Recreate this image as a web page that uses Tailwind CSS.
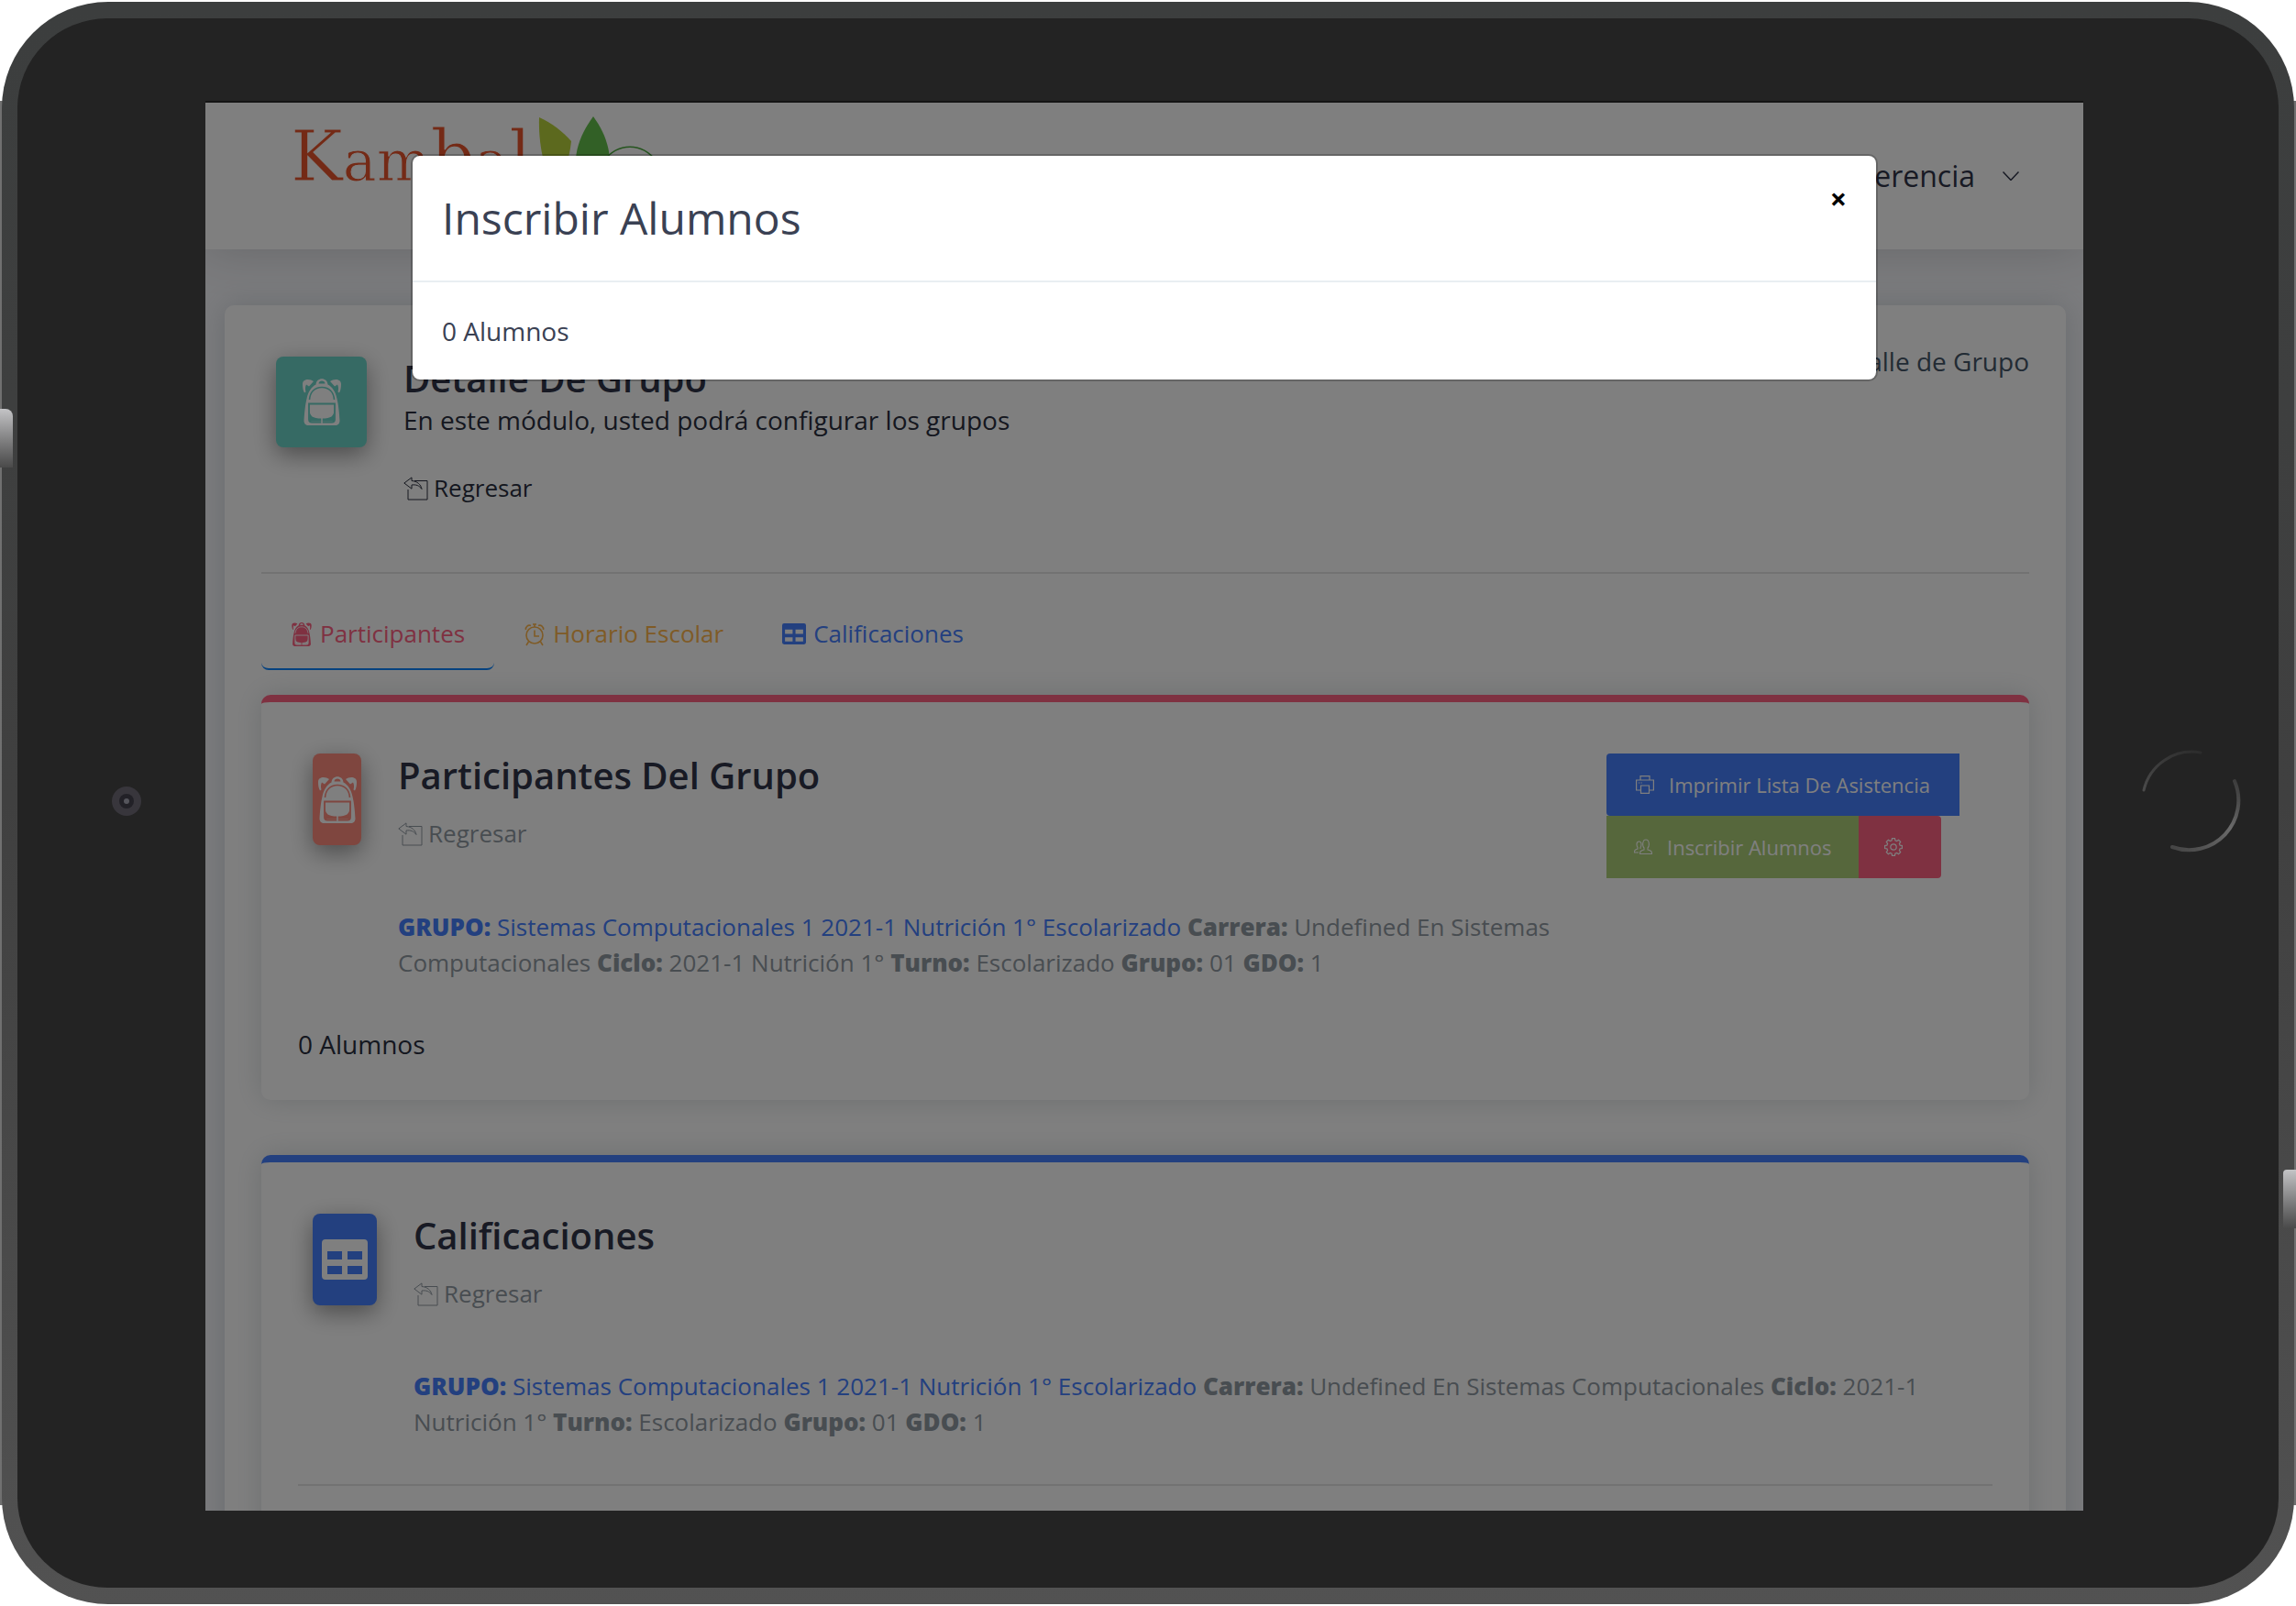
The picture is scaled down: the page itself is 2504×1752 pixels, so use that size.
<!DOCTYPE html>
<html lang="es">
<head>
<meta charset="utf-8">
<title>Detalle de Grupo</title>
<script src="https://cdn.jsdelivr.net/npm/@tailwindcss/browser@4"></script>
</head>
<body class="bg-white font-['Open_Sans',sans-serif] text-[26px] leading-[39px] text-[#2a2f3e]">

<svg class="absolute size-0" aria-hidden="true">
  <mask id="backpack-cut" maskUnits="userSpaceOnUse" x="-2" y="-2" width="46" height="56">
    <rect x="-2" y="-2" width="46" height="56" fill="#fff"/>
    <path d="M7.500 23C8 15 13 9.500 21 9.500S34 15 34.500 23" fill="none" stroke="#000" stroke-width="1.600"/>
    <path d="M7 27.500h28v17a3 3 0 0 1-3 3H10a3 3 0 0 1-3-3z" fill="none" stroke="#000" stroke-width="1.800"/>
    <path d="M7.500 34c.5 7 3 9.500 13.500 9.500S34 41 34.500 34v12.500h-27z" fill="#000"/>
    <path d="M17.500 5.500c0-4 7-4 7 0z" fill="#000"/>
  </mask>
  <symbol id="backpack" viewBox="0 0 42 51">
    <g mask="url(#backpack-cut)" fill="currentColor">
      <path d="M14.500 6.500C15-2 27-2 27.500 6.500c5 2.500 8.500 8 10 15.500 1.500 6 2.500 15 3 24 0 3-2 5-5 5h-29c-3 0-5-2-5-5C2 37 3 28 4.500 22 6 14.500 9.500 9 14.500 6.500z"/>
      <path d="M12 3C8 0 0 0 0 6c0 4 .5 7 2 9.500l1.500-1C2.500 11 3 8.500 4 6.500l3 2z"/>
      <path d="M30 3c4-3 12-3 12 3 0 4-.5 7-2 9.500l-1.500-1c1-3.500.5-6-.5-8l-3 2z"/>
    </g>
    <path d="M21 43v6" stroke="currentColor" stroke-width="1.500"/>
  </symbol>
  <symbol id="back" viewBox="0 0 27 26">
    <g fill="none" stroke="currentColor" stroke-width="1">
      <path d="M12 4.500h14V25H5V14"/>
      <path d="M.8 7 9 .9v3.600c6 .5 10 4 11 9-3-4-6-5-11-4.500v4.200z"/>
    </g>
  </symbol>
  <symbol id="table" viewBox="0 0 50 44">
    <path fill="currentColor" fill-rule="evenodd" d="M4 0h42a4 4 0 0 1 4 4v36a4 4 0 0 1-4 4H4a4 4 0 0 1-4-4V4a4 4 0 0 1 4-4zM6 13v9h16v-9zM28 13v9h16v-9zM6 29v9h16v-9zM28 29v9h16v-9z"/>
  </symbol>
</svg>

<div class="relative h-screen overflow-hidden p-0.5">
  <!-- light catching the tablet's side edges -->
  <div class="absolute inset-x-0 top-[110px] bottom-[110px] bg-[#707070]"></div>

  <!-- tablet body -->
  <div class="relative h-full rounded-[116px] bg-linear-to-b from-[#3c3e3e] via-[#404040] to-[#525252] px-[17px] py-[18px]">
    <div class="h-full rounded-[98px] bg-[#232323] pt-[92px] pr-[213px] pb-[84px] pl-[205px]">

      <!-- screen -->
      <div class="relative h-full overflow-hidden bg-[#f6f7fb] shadow-[0_-2px_0_#141414]">
        <header class="relative flex h-40 items-start justify-between bg-white pr-[70px] pl-24 shadow-[0_0_50px_rgba(50,50,50,0.2)]">
          <svg class="h-40 w-[420px]" viewBox="0 0 420 160" role="img" aria-label="Kambal">
            <text x="-3" y="85" font-family="DejaVu Serif, serif" font-size="76" fill="#e8552c" stroke="#fff" stroke-width="1">K<tspan font-size="62">am</tspan>b<tspan font-size="62">a</tspan>l</text>
            <path d="M268 16c14 6 26 16 35 26-2 20-8 36-18 52-12-20-18-50-17-78z" fill="#b8d23c"/>
            <path d="M327 15c16 22 22 44 16 78h-30c-12-30-2-56 14-78z" fill="#64c04c"/>
            <path d="M338 64c16-21 42-21 58 0" fill="none" stroke="#4aa83c" stroke-width="1.500"/>
          </svg>
          <button class="flex items-center gap-[30px] pt-[58px] text-[32px] leading-[44px] text-[#303549]">
            Gerencia
            <svg class="w-[18px]" viewBox="0 0 18 10" fill="none" stroke="currentColor" stroke-width="1.500"><path d="M.5.5 9 9.500 17.500.5"/></svg>
          </button>
        </header>

        <main class="pt-[61px] pr-[19px] pl-[21px]">
          <div class="h-[1600px] rounded-[10px] bg-white px-10 pt-10 shadow-[0_0_30px_rgba(69,90,100,0.2)]">

            <div class="flex items-start gap-10 pl-4">
              <div class="mt-4 flex size-[99px] items-center justify-center rounded-[8px] bg-[#6cd4c8] text-white shadow-[0_8px_26px_rgba(0,0,0,0.4)]">
                <svg class="h-[51px] w-[42px]"><use href="#backpack"/></svg>
              </div>
              <div class="mt-4 flex-1">
                <h1 class="text-[40px] leading-[48px] font-semibold text-[#303549]">Detalle De Grupo</h1>
                <p class="text-[28px] leading-[42px]">En este módulo, usted podrá configurar los grupos</p>
                <a href="#" class="mt-[34px] flex items-center gap-1.5"><svg class="h-[26px] w-[27px]"><use href="#back"/></svg>Regresar</a>
              </div>
              <nav class="text-[28px] leading-[42px] text-[#455668]" aria-label="Ruta">Detalle de Grupo</nav>
            </div>

            <div class="mt-[72px] border-t-2 border-black/10 pt-7">
              <nav class="flex">
                <a href="#participantes" class="flex items-center gap-2 rounded-[8px] border-b-2 border-[#0c84ff] px-8 py-[18px] text-[#fe6283]"><svg class="h-[26px] w-6"><use href="#backpack"/></svg>Participantes</a>
                <a href="#horario" class="flex items-center gap-2 rounded-[8px] border-b-2 border-transparent px-8 py-[18px] text-[#ffb64d]">
                  <svg class="h-[26px] w-6" viewBox="0 0 22 26" fill="none" stroke="currentColor" stroke-width="1.600"><circle cx="11" cy="14" r="9"/><path d="M11 8.500V15h5M9 2h4M11 2v3M1.500 8A4 4 0 0 1 7 3.500M20.500 8A4 4 0 0 0 15 3.500M4.500 21 2 25M17.500 21l2.500 4"/></svg>Horario Escolar</a>
                <a href="#calificaciones" class="flex items-center gap-2 rounded-[8px] border-b-2 border-transparent px-8 py-[18px] text-[#4680ff]"><svg class="h-[23px] w-[26px]"><use href="#table"/></svg>Calificaciones</a>
              </nav>
            </div>

            <section id="participantes" class="mt-[27px] rounded-[10px] border-t-8 border-[#fe6283] px-10 pt-14 pb-10 shadow-[0_0_30px_rgba(69,90,100,0.2)]">
              <div class="flex items-start pr-4 pl-4">
                <div class="flex h-[100px] w-[53px] shrink-0 items-center justify-center rounded-[8px] bg-[#ff8c7e] text-white shadow-[0_8px_26px_rgba(0,0,0,0.4)]">
                  <svg class="h-[51px] w-[42px]"><use href="#backpack"/></svg>
                </div>
                <div class="ml-10 flex-1 text-[#919aa3]">
                  <h2 class="text-[40px] leading-[48px] font-semibold text-[#303549]">Participantes Del Grupo</h2>
                  <a href="#" class="mt-5 flex items-center gap-1.5"><svg class="h-[26px] w-[27px]"><use href="#back"/></svg>Regresar</a>
                  <p class="mt-[63px]"><a href="#" class="text-[#4680ff]"><b class="font-extrabold">GRUPO:</b> Sistemas Computacionales 1 2021-1 Nutrición 1° Escolarizado</a> <b class="font-extrabold">Carrera:</b> Undefined En Sistemas Computacionales <b class="font-extrabold">Ciclo:</b> 2021-1 Nutrición 1° <b class="font-extrabold">Turno:</b> Escolarizado <b class="font-extrabold">Grupo:</b> 01 <b class="font-extrabold">GDO:</b> 1</p>
                </div>
                <div class="ml-8 flex w-[405px] flex-wrap text-[22px] leading-[34px] text-white">
                  <button class="flex items-center gap-4 rounded-l-[4px] bg-[#4680ff] px-8 py-[17px]">
                    <svg class="size-5" viewBox="0 0 20 20" fill="none" stroke="currentColor" stroke-width="1.200"><path d="M5 5V.600h10V5M5 16H.600V5h18.800v11H15M5.500 11h9v8.400h-9zM3 8h1.200M5.500 8h1.200"/></svg>Imprimir Lista De Asistencia</button>
                  <button class="flex items-center gap-4 bg-[#accf78] px-[30px] py-[17px]">
                    <svg class="size-5" viewBox="0 0 20 20" fill="none" stroke="currentColor" stroke-width="1.100"><path d="M6.500 17.500h13c0-3-1-3.500-4.500-4.500v-2c2-2 2-9-2-9s-4 7-2 9v2c-3.500 1-4.500 1.500-4.500 4.500zM5 16H.500c0-2.500.7-3 3.500-4v-1.500C2.500 8 2.500 4 5.500 4 7 4 8 5 8 7c0 2-.5 3-1 3.700V12"/></svg>Inscribir Alumnos</button>
                  <button class="rounded-r-[4px] bg-[#fe6283] py-[17px] pr-[42px] pl-7" aria-label="Configurar">
                    <svg class="size-5" viewBox="0 0 20 20" fill="none" stroke="currentColor" stroke-width="1.200"><circle cx="10" cy="10" r="3.200"/><path d="M8.500.600h3l.4 2.300 1.700.7 2-1.300 2.100 2.100-1.300 2 .7 1.700 2.300.4v3l-2.300.4-.7 1.700 1.300 2-2.100 2.100-2-1.300-1.700.7-.4 2.300h-3l-.4-2.300-1.700-.7-2 1.300-2.100-2.100 1.300-2-.7-1.700L.6 11.500v-3l2.300-.4.7-1.700-1.300-2 2.100-2.100 2 1.300 1.700-.7z"/></svg></button>
                </div>
              </div>
              <p class="mt-12 text-[28px] leading-[42px]">0 Alumnos</p>
            </section>

            <section id="calificaciones" class="mt-[60px] h-[700px] rounded-[10px] border-t-8 border-[#4680ff] px-10 pt-14 shadow-[0_0_30px_rgba(69,90,100,0.2)]">
              <div class="flex items-start pr-4 pl-4">
                <div class="flex h-[100px] w-[70px] shrink-0 items-center justify-center rounded-[8px] bg-[#4680ff] text-white shadow-[0_8px_26px_rgba(0,0,0,0.4)]">
                  <svg class="h-[44px] w-[50px]"><use href="#table"/></svg>
                </div>
                <div class="ml-10 flex-1 text-[#919aa3]">
                  <h2 class="text-[40px] leading-[48px] font-semibold text-[#303549]">Calificaciones</h2>
                  <a href="#" class="mt-5 flex items-center gap-1.5"><svg class="h-[26px] w-[27px]"><use href="#back"/></svg>Regresar</a>
                  <p class="mt-[62px]"><a href="#" class="text-[#4680ff]"><b class="font-extrabold">GRUPO:</b> Sistemas Computacionales 1 2021-1 Nutrición 1° Escolarizado</a> <b class="font-extrabold">Carrera:</b> Undefined En Sistemas Computacionales <b class="font-extrabold">Ciclo:</b> 2021-1 Nutrición 1° <b class="font-extrabold">Turno:</b> Escolarizado <b class="font-extrabold">Grupo:</b> 01 <b class="font-extrabold">GDO:</b> 1</p>
                </div>
              </div>
              <hr class="mt-12 border-t-2 border-black/10">
            </section>
          </div>
        </main>

        <!-- modal over the dimmed page -->
        <div class="absolute inset-0 flex items-start justify-center bg-black/50 pt-14">
          <div role="dialog" aria-labelledby="modal-title" class="w-full max-w-[1600px] rounded-[10px] border-2 border-black/20 bg-white bg-clip-padding text-[#3a4153]">
            <div class="flex items-start justify-between border-b-2 border-[#e9eef2] p-8">
              <h2 id="modal-title" class="text-[48px] leading-[72px]">Inscribir Alumnos</h2>
              <button class="text-[32px] leading-[30px] font-bold text-black" aria-label="Cerrar">×</button>
            </div>
            <p class="p-8 text-[28px] leading-[42px]">0 Alumnos</p>
          </div>
        </div>
      </div>
    </div>
  </div>

  <!-- tablet hardware: camera, home button, side buttons -->
  <div class="absolute top-1/2 left-[122px] flex size-8 -translate-y-[18px] items-center justify-center rounded-full bg-[#38363c]">
    <div class="flex size-4 items-center justify-center rounded-full bg-[#222127]"><div class="size-1.5 rounded-full bg-[#55555c]"></div></div>
  </div>
  <svg class="absolute top-1/2 right-[58px] size-28 -translate-y-[58px]" viewBox="0 0 112 112" fill="none" stroke-linecap="round">
    <defs>
      <linearGradient id="arc-a" x1="0" y1="1" x2="1" y2="0"><stop offset="0" stop-color="#4a4a4a"/><stop offset="1" stop-color="#2c2c2c"/></linearGradient>
      <linearGradient id="arc-b" x1="1" y1="0" x2="0" y2="1"><stop offset="0" stop-color="#3a3a3a"/><stop offset=".4" stop-color="#6a6a6a"/><stop offset="1" stop-color="#444"/></linearGradient>
    </defs>
    <path d="M4 44A54 54 0 0 1 66 3" stroke="url(#arc-a)" stroke-width="3"/>
    <path d="M103 34A54 54 0 0 1 35 106" stroke="url(#arc-b)" stroke-width="4"/>
  </svg>
  <div class="absolute top-[446px] left-0 h-[64px] w-3.5 rounded-tr-[8px] bg-linear-to-b from-[#c4c4c6] to-[#4a4a4a]"></div>
  <div class="absolute top-[1276px] right-0 h-[64px] w-3.5 rounded-tl-[4px] bg-linear-to-b from-[#c4c4c6] to-[#4a4a4a]"></div>
</div>
</body>
</html>
